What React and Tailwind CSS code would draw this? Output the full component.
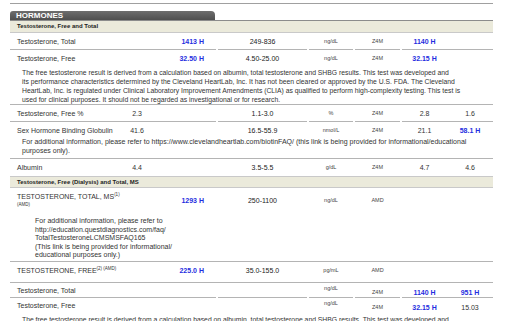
import React from "react";

const LINE = "border-b border-[#b4b4b4]";

function Row({ name, inR, flag, range, units, lab, p1, p1f, p2, p2f, line = true, h = "h-[16px]", mt = "", top = false, sec3 = false }) {
  const b = line ? LINE : "";
  const align = top ? "items-start pt-[4px]" : "items-center";
  return (
    <div className={`flex gap-[2px] ${mt}`}>
      <div className={`w-[206px] ${h} ${b} flex ${align}`}>
        <div className="w-[110px] pl-[7px] whitespace-nowrap text-[#333]">{name}</div>
        <div className="w-[34px] text-center text-[#333]">{inR}</div>
        <div className="flex-1 text-right pr-[12px] font-bold text-[#1f2ee0]">{flag}</div>
      </div>
      <div className={`w-[89px] ${h} ${b} flex ${align} justify-center text-[#222]`}>{range}</div>
      <div className={`w-[44px] ${h} ${b} flex ${sec3 ? "items-start pt-[1px]" : align} justify-center text-[5.5px] text-[#444]`}>{units}</div>
      <div className={`w-[45px] ${h} ${b} flex ${sec3 ? "items-center pt-[4px]" : align} justify-center text-[5.5px] text-[#444]`}>{lab}</div>
      <div className={`w-[91px] ${h} ${b} flex ${sec3 ? "items-center pt-[4px]" : align}`}>
        <div className={`w-[45px] text-center ${p1f ? "font-bold text-[#1f2ee0]" : "text-[#333]"}`}>{p1}</div>
        <div className={`flex-1 text-center ${p2f ? "font-bold text-[#1f2ee0]" : "text-[#333]"}`}>{p2}</div>
      </div>
    </div>
  );
}

function Bar({ children, mt = "", h = "h-[11px]", top = "border-[#8c8c8c]" }) {
  return (
    <div className={`border-t ${top} border-b border-b-[#c9c9c9] bg-[#ebeadb] ${mt}`}>
      <div className={`${h} flex items-center pl-[7px] font-bold text-[6px] text-[#222]`}>{children}</div>
    </div>
  );
}

function Para({ lines, pt = "pt-[2px]" }) {
  return (
    <div className={`pl-[12px] ${pt} text-[6.8px] leading-[9px] text-[#333] ${LINE}`}>
      {lines.map((l, i) => (
        <div key={i} className="whitespace-nowrap">{l}</div>
      ))}
    </div>
  );
}

const PARA = [
  "The free testosterone result is derived from a calculation based on albumin, total testosterone and SHBG results. This test was developed and",
  "its performance characteristics determined by the Cleveland HeartLab, Inc. It has not been cleared or approved by the U.S. FDA. The Cleveland",
  "HeartLab, Inc. is regulated under Clinical Laboratory Improvement Amendments (CLIA) as qualified to perform high-complexity testing. This test is",
  "used for clinical purposes. It should not be regarded as investigational or for research.",
];

export default function App() {
  return (
    <div className="w-[512px] h-[321px] overflow-hidden bg-white font-['Liberation_Sans',Arial,sans-serif] text-[7px] leading-[9px]">
      <div className="ml-[10px] w-[483px]">
        <div className="mt-[3px] h-px bg-[#a0a0a0]" />
        <div className="mt-[7px] w-[205px] h-[9px] rounded-tl-[3px] rounded-tr-[4px] bg-gradient-to-b from-[#6e6e6e] to-[#4f4f4f] flex items-center pl-[6px]">
          <span className="text-white font-bold text-[8px] leading-none">HORMONES</span>
        </div>
        <Bar>Testosterone, Free and Total</Bar>

        <Row mt="mt-[1px]" name="Testosterone, Total" flag="1413 H" range="249-836" units="ng/dL" lab="Z4M" p1="1140 H" p1f />
        <Row line={false} name="Testosterone, Free" flag="32.50 H" range="4.50-25.00" units="ng/dL" lab="Z4M" p1="32.15 H" p1f />
        <Para lines={PARA} />
        <Row mt="mt-[1px]" name="Testosterone, Free %" inR="2.3" range="1.1-3.0" units="%" lab="Z4M" p1="2.8" p2="1.6" />
        <Row line={false} name="Sex Hormone Binding Globulin" inR="41.6" range="16.5-55.9" units="nmol/L" lab="Z4M" p1="21.1" p2="58.1 H" p2f />
        <div className={`pl-[12px] pb-[3px] leading-[8.5px] text-[#333] ${LINE}`}>
          <div className="whitespace-nowrap">For additional information, please refer to https://www.clevelandheartlab.com/biotinFAQ/ (this link is being provided for informational/educational</div>
          <div className="whitespace-nowrap">purposes only).</div>
        </div>
        <Row line={false} name="Albumin" inR="4.4" range="3.5-5.5" units="g/dL" lab="Z4M" p1="4.7" p2="4.6" />
        <Bar mt="mt-[1px]" h="h-[10px]" top="border-[#c9c9c9]">Testosterone, Free (Dialysis) and Total, MS</Bar>

        <Row
          line={false}
          h="h-[25px]"
          name={
            <div className="flex flex-col">
              <span className="leading-[8px]">
                TESTOSTERONE, TOTAL, MS<span className="align-super text-[4.5px] leading-none">(1)</span>
              </span>
              <span className="text-[4.5px] leading-[6px]">(AMD)</span>
            </div>
          }
          flag="1293 H"
          range="250-1100"
          units="ng/dL"
          lab="AMD"
        />
        <div className={`pl-[25px] pt-[4px] pb-[1.5px] leading-[8.5px] text-[#333] ${LINE}`}>
          <div className="whitespace-nowrap">For additional information, please refer to</div>
          <div className="whitespace-nowrap">http://education.questdiagnostics.com/faq/</div>
          <div className="whitespace-nowrap">TotalTestosteroneLCMSMSFAQ165</div>
          <div className="whitespace-nowrap">(This link is being provided for informational/</div>
          <div className="whitespace-nowrap">educational purposes only.)</div>
        </div>
        <div className={`h-[21px] ${LINE}`}>
          <Row
            line={false}
            h="h-[21px]"
            top
            name={
              <span>
                TESTOSTERONE, FREE<span className="align-super text-[4.5px] leading-none">(2) (AMD)</span>
              </span>
            }
            flag="225.0 H"
            range="35.0-155.0"
            units="pg/mL"
            lab="AMD"
          />
        </div>
        <Row h="h-[15px]" sec3 name="Testosterone, Total" units="ng/dL" lab="Z4M" p1="1140 H" p1f p2="951 H" p2f />
        <Row line={false} h="h-[15px]" sec3 name="Testosterone, Free" units="ng/dL" lab="Z4M" p1="32.15 H" p1f p2="15.03" />
        <Para lines={PARA} />
      </div>
    </div>
  );
}
